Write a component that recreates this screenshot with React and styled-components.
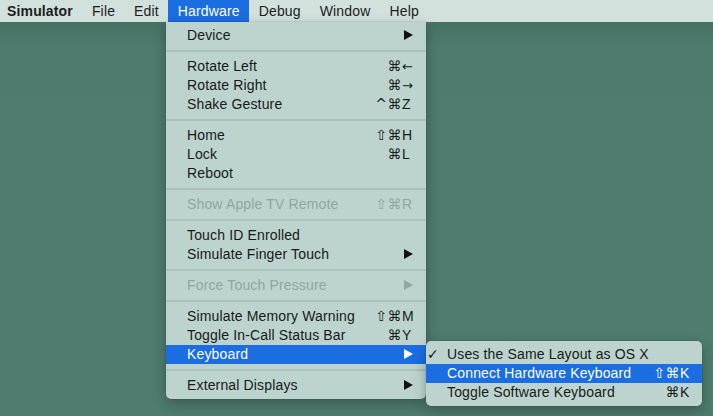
import React from "react";
import styled, { createGlobalStyle } from "styled-components";

const GlobalStyle = createGlobalStyle`
  html, body { margin: 0; padding: 0; }
  body {
    font-family: "Liberation Sans", Arial, "DejaVu Sans", sans-serif;
    font-size: 14px;
    color: #161a19;
  }
`;

const Screen = styled.div`
  position: relative;
  width: 713px;
  height: 416px;
  overflow: hidden;
  display: flex;
  flex-direction: column;
  background: linear-gradient(#3d675b 0px, #4e7b6e 45px, #4f7c6f 100%);
`;

const MenuBar = styled.div`
  display: flex;
  height: 22px;
  background: #d3e1dd;
`;

const BarItem = styled.div`
  display: flex;
  align-items: center;
  height: 22px;
  padding: 0 9.5px;
  letter-spacing: 0.15px;
  font-weight: ${(p) => (p.$bold ? 700 : 400)};
  color: ${(p) => (p.$active ? "#fff" : "#1a1d1c")};
  background: ${(p) => (p.$active ? "#1b6de2" : "transparent")};
  &:first-child { padding-left: 7px; }
`;

const Desktop = styled.div`
  flex: 1;
`;

const Menu = styled.div`
  position: absolute;
  left: ${(p) => p.$left}px;
  top: ${(p) => p.$top}px;
  width: ${(p) => p.$width}px;
  padding: 4px 0;
  background: #bdd4ce;
  border-radius: ${(p) => (p.$sub ? "5px" : "0 0 5px 5px")};
  box-shadow: 0 5px 14px rgba(0, 0, 0, 0.28), 0 0 0 0.5px rgba(0, 0, 0, 0.12);
`;

const Row = styled.div`
  display: flex;
  align-items: center;
  height: 18px;
  padding-bottom: 1px;
  padding-right: ${(p) => (p.$sub ? 10 : 12)}px;
  letter-spacing: 0.15px;
  white-space: nowrap;
  color: ${(p) => (p.$active ? "#fff" : p.$disabled ? "#8ea79f" : "#161a19")};
  background: ${(p) => (p.$active ? "#1b6de2" : "transparent")};
`;

const Check = styled.span`
  width: 21px;
  flex: none;
  padding-left: 1px;
  box-sizing: border-box;
  font-family: "DejaVu Sans", sans-serif;
  font-size: 14px;
`;

const Label = styled.span`
  flex: 1;
`;

const Mods = styled.span`
  font-family: "DejaVu Sans", sans-serif;
  font-size: 14px;
  letter-spacing: 0.5px;
`;

const Key = styled.span`
  width: 12px;
  flex: none;
  display: flex;
  align-items: center;
  justify-content: ${(p) => (p.$arrow ? "flex-end" : "flex-start")};
  font-family: ${(p) =>
    p.$glyph ? '"DejaVu Sans", sans-serif' : '"Liberation Sans", Arial, sans-serif'};
  font-size: ${(p) => (p.$glyph ? "13px" : "14px")};
`;

const Separator = styled.div`
  height: 2px;
  margin: 5px 0;
  background: #a9c2bb;
`;

const Arrow = ({ color }) => (
  <svg width="9" height="10" viewBox="0 0 9 10" style={{ marginRight: 1 }}>
    <polygon points="0,0 9,5 0,10" fill={color} />
  </svg>
);

const bar = ["Simulator", "File", "Edit", "Hardware", "Debug", "Window", "Help"];

const hardware = [
  { label: "Device", arrow: true },
  "sep",
  { label: "Rotate Left", mods: "⌘", key: "←", glyph: true },
  { label: "Rotate Right", mods: "⌘", key: "→", glyph: true },
  { label: "Shake Gesture", mods: "^⌘", key: "Z" },
  "sep",
  { label: "Home", mods: "⇧⌘", key: "H" },
  { label: "Lock", mods: "⌘", key: "L" },
  { label: "Reboot" },
  "sep",
  { label: "Show Apple TV Remote", mods: "⇧⌘", key: "R", disabled: true },
  "sep",
  { label: "Touch ID Enrolled" },
  { label: "Simulate Finger Touch", arrow: true },
  "sep",
  { label: "Force Touch Pressure", arrow: true, disabled: true },
  "sep",
  { label: "Simulate Memory Warning", mods: "⇧⌘", key: "M" },
  { label: "Toggle In-Call Status Bar", mods: "⌘", key: "Y" },
  { label: "Keyboard", arrow: true, active: true },
  "sep",
  { label: "External Displays", arrow: true },
];

const keyboard = [
  { label: "Uses the Same Layout as OS X", checked: true },
  { label: "Connect Hardware Keyboard", mods: "⇧⌘", key: "K", active: true },
  { label: "Toggle Software Keyboard", mods: "⌘", key: "K" },
];

const arrowColor = (item) =>
  item.active ? "#fff" : item.disabled ? "#8ea79f" : "#111";

const MenuRow = ({ item, sub }) => (
  <Row $active={item.active} $disabled={item.disabled} $sub={sub}>
    <Check>{item.checked ? "✓" : ""}</Check>
    <Label>{item.label}</Label>
    {item.mods && <Mods>{item.mods}</Mods>}
    {(item.key || item.arrow) && (
      <Key $arrow={item.arrow} $glyph={item.glyph}>
        {item.arrow ? <Arrow color={arrowColor(item)} /> : item.key}
      </Key>
    )}
  </Row>
);

export default function App() {
  return (
    <>
      <GlobalStyle />
      <Screen>
        <MenuBar>
          {bar.map((name, i) => (
            <BarItem key={name} $bold={i === 0} $active={name === "Hardware"}>
              {name}
            </BarItem>
          ))}
        </MenuBar>
        <Desktop />

        <Menu $left={166} $top={22} $width={260}>
          {hardware.map((item, i) =>
            item === "sep" ? (
              <Separator key={i} />
            ) : (
              <MenuRow key={i} item={item} />
            )
          )}
        </Menu>

        <Menu $sub $left={426} $top={341} $width={276}>
          {keyboard.map((item, i) => (
            <MenuRow key={i} item={item} sub />
          ))}
        </Menu>
      </Screen>
    </>
  );
}
